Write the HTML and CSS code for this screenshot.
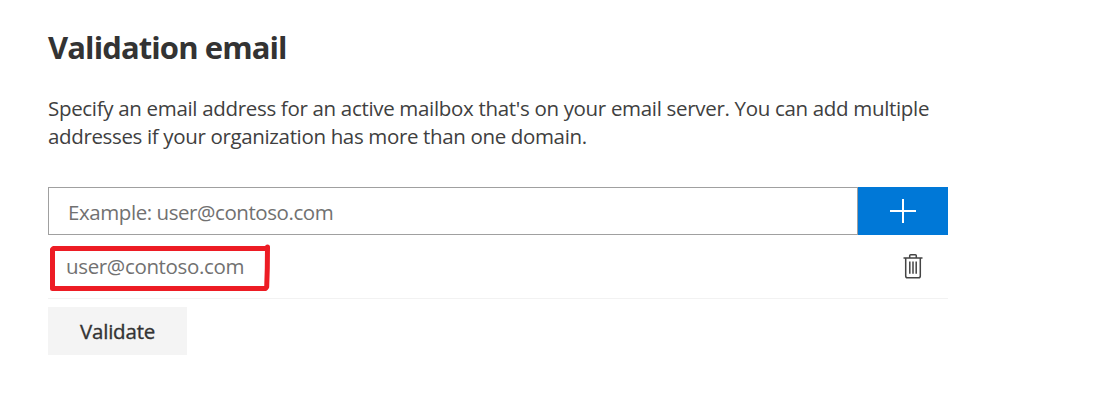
FILE: index.html
```html
<!DOCTYPE html>
<html lang="en">
<head>
<meta charset="utf-8">
<title>Validation email</title>
<link rel="stylesheet" href="styles.css">
</head>
<body>
<main class="panel">
  <h1 class="title">Validation email</h1>
  <p class="description"><span class="line line-first">Specify an email address for an active mailbox that's on your email server. You can add multiple</span> <span class="line line-second">addresses if your organization has more than one domain.</span></p>
  <div class="entry">
    <div class="field"><span class="hint">Example: user@contoso.com</span></div>
    <button class="add" aria-label="Add">
      <svg width="26" height="26" viewBox="0 0 26 26"><path d="M0 13H26M13 1V25" stroke="#fff" stroke-width="2"/></svg>
    </button>
  </div>
  <div class="item">
    <span class="address">user@contoso.com</span>
    <svg class="trash" width="20" height="26" viewBox="0 0 20 26" fill="none" stroke="#444" stroke-width="1.5"><path d="M0.5 5H19.5M6.7 4.3V2.7Q6.7 1.7 7.7 1.7H12.3Q13.3 1.7 13.3 2.7V4.3M2.7 5V22.9Q2.7 24.7 4.5 24.7H15.5Q17.3 24.7 17.3 22.9V5"/><path d="M6.8 8.5V20.7M10 8.5V20.7M13.2 8.5V20.7"/></svg>
    <svg class="highlight" width="222" height="48" viewBox="0 0 222 48" fill="none" stroke="#ed1c24" stroke-width="5" stroke-linecap="round" stroke-linejoin="round"><path d="M4.5 4.5H218.5L218.5 3L218.3 24L217.7 43L216.5 44.5H3.5V5.5Z"/></svg>
  </div>
  <button class="validate">Validate</button>
</main>
</body>
</html>
```
FILE: styles.css
```css
body {
  margin: 0;
  background: #fff;
  color: #333;
  font-family: "Open Sans", "Noto Sans", sans-serif;
  font-size: 20.5px;
}
.panel {
  width: 900px;
  padding: 25px 0 0 48px;
}
.title {
  margin: 0;
  font-size: 31px;
  font-weight: 700;
  line-height: 44px;
  letter-spacing: -0.9px;
}
.description {
  margin: 25px 0 37px;
  color: #404040;
  line-height: 28px;
}
.line {
  display: block;
  white-space: nowrap;
}
.line-first {
  letter-spacing: -0.32px;
}
.line-second {
  letter-spacing: -0.35px;
}
.entry {
  display: flex;
  height: 48px;
}
.field {
  box-sizing: border-box;
  flex: 1;
  display: flex;
  align-items: center;
  padding: 1px 0 0 19px;
  border: 1px solid #a0a0a0;
}
.hint,
.address {
  color: #717171;
  line-height: 28px;
}
.hint {
  letter-spacing: -0.43px;
}
.address {
  letter-spacing: -0.34px;
}
.add {
  display: flex;
  align-items: center;
  justify-content: center;
  width: 90px;
  padding: 0;
  border: 0;
  background: #0078d7;
}
.item {
  position: relative;
  box-sizing: border-box;
  display: flex;
  align-items: center;
  justify-content: space-between;
  height: 64px;
  padding: 0 25px 2px 18px;
  border-bottom: 1px solid #f2f2f2;
}
.highlight {
  position: absolute;
  left: 1px;
  top: 9px;
}
.validate {
  display: block;
  width: 139px;
  height: 48px;
  margin-top: 8px;
  padding: 0 0 1px;
  border: 0;
  background: #f4f4f4;
  color: #333;
  font: 500 20.5px "Open Sans", sans-serif;
  letter-spacing: -0.2px;
  -webkit-text-stroke: 0.35px #333;
}
```
